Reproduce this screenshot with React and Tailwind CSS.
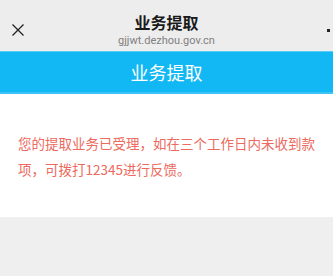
import React from 'react';

const CJK = { fontFamily: '"Noto Sans CJK SC", "Noto Sans", sans-serif' };

export default function App() {
  return (
    <div className="w-[333px] h-[276px] bg-[#efefef] flex flex-col" style={CJK}>
      {/* top bar */}
      <div className="relative h-[51px] bg-[#ededed] flex flex-col items-center">
        <svg viewBox="0 0 12 12" className="absolute left-[12px] top-[24px] w-[12px] h-[12px]" stroke="#222" strokeWidth="1.3" fill="none">
          <path d="M0.5 0.5L11.5 11.5M11.5 0.5L0.5 11.5" />
        </svg>
        <div className="mt-[11px] text-[16px] leading-[23px] font-semibold text-[#1a1a1a]">业务提取</div>
        <div className="text-[11px] leading-[13px] text-[#808080]" style={{ fontFamily: 'Roboto, "Noto Sans", sans-serif' }}>
          gjjwt.dezhou.gov.cn
        </div>
        <span className="absolute right-[3px] top-[29px] w-[3px] h-[3px] bg-[#222]" />
      </div>

      {/* blue title */}
      <div className="h-[43px] bg-[#12b8f4] border-t border-[#5ccbf3] border-b-2 border-b-[#3dc3f5] flex items-center justify-center">
        <span className="text-white text-[18px] leading-[26px]">业务提取</span>
      </div>

      {/* message */}
      <div className="bg-white h-[123px] pt-[36px] px-[18px]">
        <p className="text-[#ec6a5e] text-[13.5px] leading-[26px]">
          您的提取业务已受理，如在三个工作日内未收到款项，可拨打12345进行反馈。
        </p>
      </div>
    </div>
  );
}
